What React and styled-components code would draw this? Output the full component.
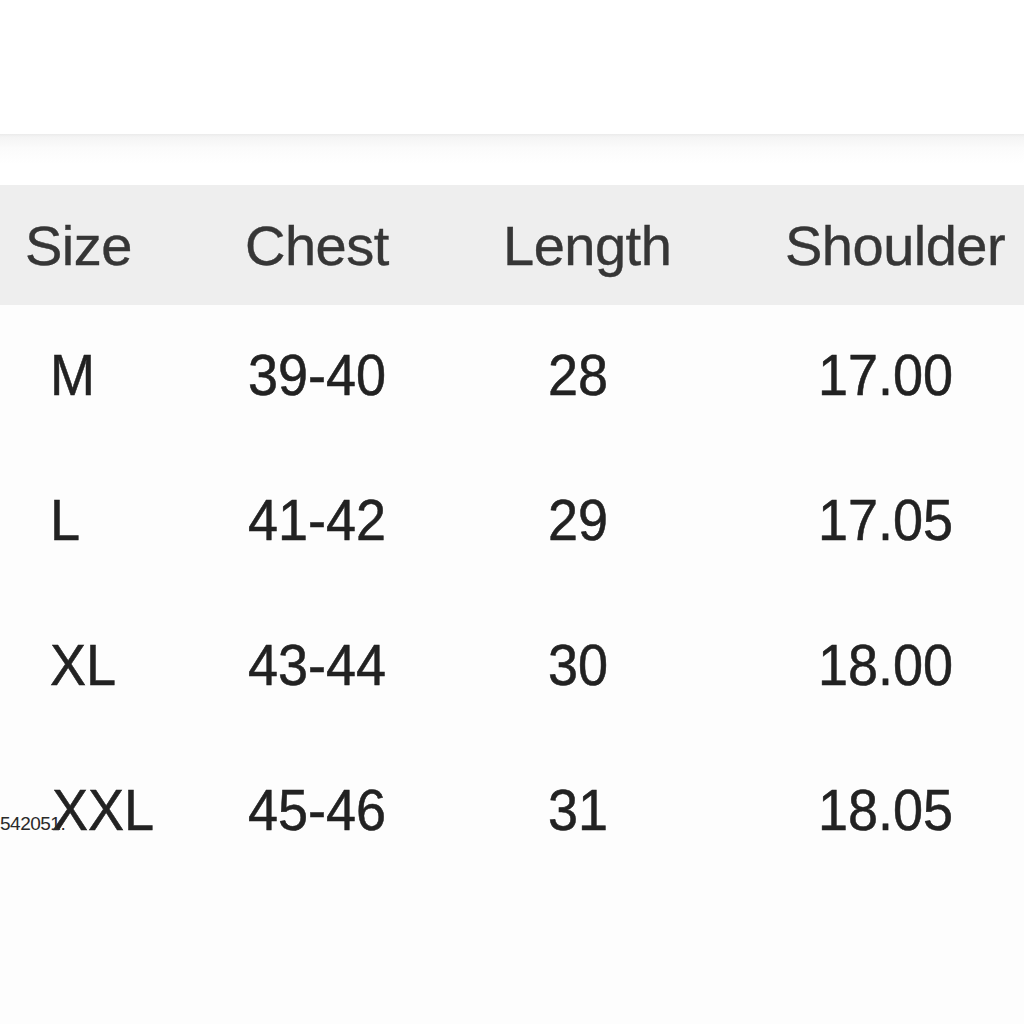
import React from "react";
import styled, { createGlobalStyle } from "styled-components";

const Global = createGlobalStyle`
  html, body { margin: 0; padding: 0; background: #ffffff; }
  body { font-family: "Liberation Sans", Arial, sans-serif; }
`;

const Page = styled.div`
  width: 1024px;
  height: 1024px;
  overflow: hidden;
  position: relative;
  background: #fdfdfd;
`;

const TopBlank = styled.div`
  height: 134px;
  background: #ffffff;
`;

const Rule = styled.div`
  height: 51px;
  background: linear-gradient(#ebebeb 0px, #f4f4f4 3px, #fbfbfb 14px, #ffffff 30px);
`;

const Row = styled.div`
  display: grid;
  grid-template-columns: 220px 250px 270px 284px;
  align-items: center;
  height: ${(p) => p.h}px;
  background: ${(p) => p.bg || "transparent"};
`;

const HeadCell = styled.div`
  padding-left: ${(p) => p.pl}px;
  font-size: 56px;
  color: #363636;
  white-space: nowrap;
  letter-spacing: -0.5px;
  -webkit-text-stroke: 0.4px #363636;
`;

const Cell = styled.div`
  padding-left: ${(p) => p.pl}px;
  padding-bottom: 6px;
  font-size: 54px;
  color: #222222;
  white-space: nowrap;
  letter-spacing: 0px;
  transform: scaleY(1.05);
  -webkit-text-stroke: 0.5px #222222;
`;

const Mark = styled.span`
  position: absolute;
  left: 0px;
  top: 813px;
  font-family: "Liberation Sans", Arial, sans-serif;
  font-size: 19px;
  color: #2a2a2a;
  letter-spacing: -0.5px;
`;

const heads = [
  { t: "Size", pl: 25 },
  { t: "Chest", pl: 25 },
  { t: "Length", pl: 33 },
  { t: "Shoulder", pl: 45 },
];

const pads = [50, 28, 78, 78];

const rows = [
  ["M", "39-40", "28", "17.00"],
  ["L", "41-42", "29", "17.05"],
  ["XL", "43-44", "30", "18.00"],
  ["XXL", "45-46", "31", "18.05"],
];

export default function App() {
  return (
    <>
      <Global />
      <Page>
        <TopBlank />
        <Rule />
        <Row h={120} bg="#eeeeee">
          {heads.map((h) => (
            <HeadCell key={h.t} pl={h.pl}>{h.t}</HeadCell>
          ))}
        </Row>
        {rows.map((r, i) => (
          <Row key={i} h={145}>
            {r.map((c, j) => (
              <Cell key={j} pl={j == 0 && i == 3 ? 52 : pads[j]}>{c}</Cell>
            ))}
          </Row>
        ))}
        <Mark>542051.</Mark>
      </Page>
    </>
  );
}
